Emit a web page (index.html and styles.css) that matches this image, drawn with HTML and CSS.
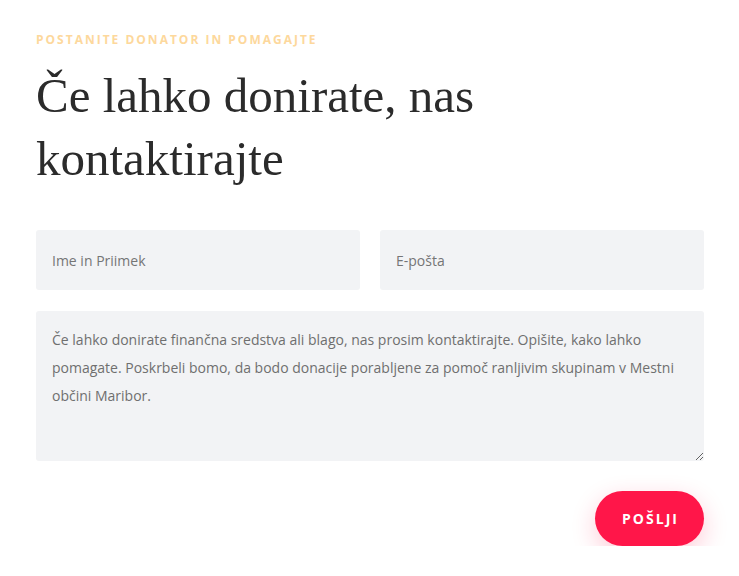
FILE: index.html
```html
<!DOCTYPE html>
<html lang="sl">
<head>
<meta charset="utf-8">
<link rel="stylesheet" href="styles.css">
</head>
<body>
<section class="contact">
  <p class="eyebrow">Postanite donator in pomagajte</p>
  <h1 class="title">Če lahko donirate, nas kontaktirajte</h1>
  <form class="form">
    <div class="row">
      <input class="field" type="text" placeholder="Ime in Priimek">
      <input class="field" type="email" placeholder="E-pošta">
    </div>
    <textarea class="field area">Če lahko donirate finančna sredstva ali blago, nas prosim kontaktirajte. Opišite, kako lahko pomagate. Poskrbeli bomo, da bodo donacije porabljene za pomoč ranljivim skupinam v Mestni občini Maribor.</textarea>
    <div class="actions">
      <button class="send" type="button">Pošlji</button>
    </div>
  </form>
</section>
</body>
</html>
```
FILE: styles.css
```css
* { box-sizing: border-box; }
html, body { margin: 0; padding: 0; background: #fff; }
body { font-family: "Open Sans", "Liberation Sans", sans-serif; }
.contact { padding: 31px 35px 0 36px; }
.eyebrow {
  margin: 0;
  font-size: 12px;
  line-height: 18px;
  font-weight: 700;
  letter-spacing: 2px;
  text-transform: uppercase;
  color: #fdd89c;
}
.title {
  margin: 15px 0 0;
  font-family: "Liberation Serif", "DejaVu Serif", serif;
  font-weight: 400;
  font-size: 49px;
  line-height: 63px;
  color: #2b2b2b;
  width: 480px;
}
.form { margin-top: 40px; display: flex; flex-direction: column; gap: 21px; }
.row { display: flex; gap: 20px; }
.field {
  flex: 1;
  min-width: 0;
  height: 60px;
  border: none;
  border-radius: 3px;
  background: #f2f3f5;
  padding: 0 16px;
  font-family: "Open Sans", "Liberation Sans", sans-serif;
  font-size: 14px;
  color: #6f6f6f;
  outline: none;
}
.field::placeholder { color: #757575; }
.area {
  flex: none;
  height: 150px;
  padding: 15px 16px;
  line-height: 28px;
  resize: vertical;
  display: block;
  width: 100%;
}
.actions { display: flex; justify-content: flex-end; margin-top: 9px; }
.send {
  width: 109px;
  height: 55px;
  border: none;
  border-radius: 28px;
  background: #ff1649;
  color: #fff;
  font-family: "Open Sans", "Liberation Sans", sans-serif;
  font-weight: 700;
  font-size: 14px;
  letter-spacing: 2px;
  text-transform: uppercase;
  box-shadow: 0 8px 24px rgba(255, 22, 73, 0.22);
  padding: 0 0 0 2px;
}
```
